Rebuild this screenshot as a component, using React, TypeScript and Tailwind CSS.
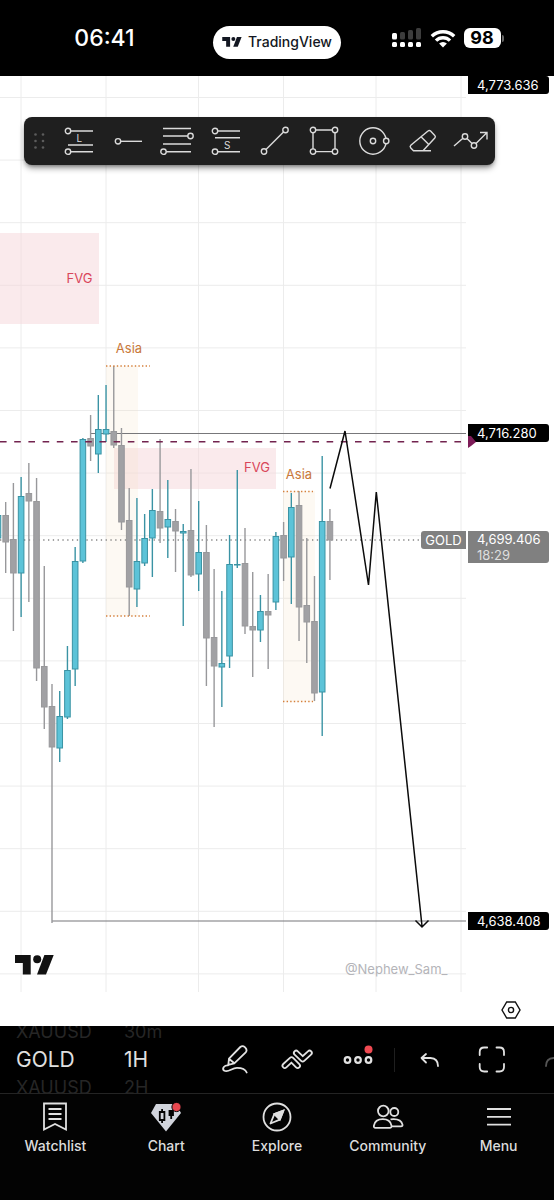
import type { ReactNode } from "react";

const CHART_TOP = 76;
const CHART_HEIGHT = 916;
const FIRST_X = 52;
const STEP = 7.72;

// [index, body top, body bottom, wick top, wick bottom, is up]
type Candle = [number, number, number, number, number, 0 | 1];

const candles: Candle[] = [
  [-7, 515, 538, 515, 538, 1],
  [-6, 515, 542, 502, 573, 0],
  [-5, 539, 573, 483, 631, 0],
  [-4, 496, 573, 477, 617, 1],
  [-3, 493, 501, 463, 602, 0],
  [-2, 501, 668, 478, 681, 0],
  [-1, 666, 707, 566, 729, 0],
  [0, 706, 747, 684, 923, 0],
  [1, 716, 748, 691, 762, 1],
  [2, 670, 717, 646, 719, 1],
  [3, 561, 669, 547, 686, 1],
  [4, 439, 561, 438, 563, 1],
  [5, 438, 446, 415, 461, 0],
  [6, 429, 454, 395, 473, 1],
  [7, 429, 434, 385, 442, 1],
  [8, 431, 445, 366, 448, 0],
  [9, 445, 522, 428, 530, 0],
  [10, 520, 587, 488, 616, 0],
  [11, 561, 589, 498, 607, 1],
  [12, 538, 563, 514, 566, 1],
  [13, 510, 538, 489, 577, 1],
  [14, 511, 528, 439, 543, 0],
  [15, 519, 527, 480, 558, 1],
  [16, 521, 531, 509, 572, 0],
  [17, 531, 533, 524, 626, 1],
  [18, 530, 575, 469, 577, 0],
  [19, 552, 574, 501, 591, 1],
  [20, 552, 638, 525, 686, 0],
  [21, 637, 666, 569, 727, 0],
  [22, 663, 667, 591, 707, 1],
  [23, 564, 656, 535, 668, 1],
  [24, 564, 565, 470, 568, 1],
  [25, 563, 626, 528, 634, 0],
  [26, 626, 630, 572, 677, 0],
  [27, 611, 630, 595, 642, 1],
  [28, 611, 615, 574, 669, 0],
  [29, 536, 602, 532, 610, 1],
  [30, 535, 558, 522, 581, 0],
  [31, 507, 557, 493, 604, 1],
  [32, 505, 607, 491, 641, 0],
  [33, 605, 622, 538, 663, 0],
  [34, 621, 693, 576, 701, 0],
  [35, 521, 692, 456, 736, 1],
  [36, 521, 540, 509, 580, 0],
];

const gridX = [21, 106, 198.5, 283.5, 376, 461];
const gridY = Array.from({ length: 15 }, (_, i) => 97.5 + i * 62.6);

function LogoMark({ className }: { className: string }) {
  return (
    <svg viewBox="0 0 39 20" className={className} fill="currentColor">
      <path d="M0 0h15.7v19.4H7.8V8H0z" />
      <circle cx="22.2" cy="4.2" r="4" />
      <path d="M29.4 0h9.3L31 19.4h-9z" />
    </svg>
  );
}

function StatusBar() {
  return (
    <header className="grid h-[76px] grid-cols-[1fr_auto_1fr] items-center bg-black text-white">
      <span className="pr-1 text-center text-[23px] font-medium">06:41</span>
      <div className="mt-2 flex h-[33px] w-32 items-center justify-center gap-1.5 rounded-full bg-white text-[#131722]">
        <LogoMark className="h-[10px] w-5" />
        <span className="text-sm font-medium">TradingView</span>
      </div>
      <div className="flex items-center justify-center gap-2">
        <svg viewBox="0 0 30 20" className="h-5 w-[30px]">
          <g fill="#fff">
            {[0, 8, 16, 24].map((x) => (
              <rect key={x} x={x} y="14" width="5" height="5" rx="1.5" />
            ))}
            <rect x="0" y="5" width="5" height="6.5" rx="1.5" />
          </g>
          <g fill="#3d3d3d">
            <rect x="8" y="4" width="5" height="7.5" rx="1.5" />
            <rect x="16" y="2" width="5" height="9.5" rx="1.5" />
            <rect x="24" y="0" width="5" height="11.5" rx="1.5" />
          </g>
        </svg>
        <svg viewBox="0 0 26 19" className="h-[19px] w-[26px]" fill="none" stroke="#fff" strokeWidth="3.4">
          <path d="M1.8 7.3a16 16 0 0 1 22.4 0" />
          <path d="M6 11.6a10 10 0 0 1 14 0" />
          <path d="M13 18.6l-3.9-4a5.6 5.6 0 0 1 7.8 0z" fill="#fff" stroke="none" />
        </svg>
        <div className="flex items-center gap-px">
          <span className="flex h-5 w-[37px] items-center justify-center rounded-md bg-white text-lg font-bold text-black">
            98
          </span>
          <span className="h-[7px] w-0.5 rounded-r-full bg-[#666]"></span>
        </div>
      </div>
    </header>
  );
}

function Tool({ label, children }: { label: string; children: ReactNode }) {
  return (
    <button aria-label={label} className="flex flex-1 justify-center">
      <svg
        viewBox="0 0 32 32"
        className="h-8 w-8 overflow-visible"
        fill="none"
        stroke="#dbdbdb"
        strokeWidth="1.4"
      >
        {children}
      </svg>
    </button>
  );
}

function Dot({ x, y }: { x: number; y: number }) {
  return <circle cx={x} cy={y} r="2.7" fill="#1f1f1f" />;
}

function DrawingToolbar() {
  return (
    <div className="absolute top-[41px] right-[59px] left-6 flex h-12 items-center rounded-lg bg-[#1f1f1f] shadow-md shadow-black/40">
      <svg viewBox="0 0 30 32" className="h-8 w-[30px] shrink-0" fill="#5c5c5c">
        {[9.5, 16, 22.5].map((y) => (
          <g key={y}>
            <circle cx="11.5" cy={y} r="1.3" />
            <circle cx="19" cy={y} r="1.3" />
          </g>
        ))}
      </svg>
      <Tool label="Long position">
        <path d="M5 6h25M5 20h25M5 26.7h25" />
        <Dot x={5} y={6} />
        <Dot x={5} y={26.7} />
        <text x="13.5" y="17" fontSize="10" fill="#dbdbdb" stroke="none">L</text>
      </Tool>
      <Tool label="Horizontal ray">
        <path d="M6 16.3h24" />
        <Dot x={6} y={16.3} />
      </Tool>
      <Tool label="Fib retracement">
        <path d="M2 3.5h28M2 11h28M2 19h28M2 26.7h28" />
        <Dot x={29.5} y={11} />
        <Dot x={2.5} y={26.7} />
      </Tool>
      <Tool label="Short position">
        <path d="M5 6h25M5 12.7h25M5 26.7h25" />
        <Dot x={5} y={6} />
        <Dot x={5} y={26.7} />
        <text x="14" y="23.5" fontSize="10" fill="#dbdbdb" stroke="none">S</text>
      </Tool>
      <Tool label="Trend line">
        <path d="M5 26.5L26.5 5" />
        <Dot x={5} y={26.5} />
        <Dot x={26.5} y={5} />
      </Tool>
      <Tool label="Rectangle">
        <path d="M5 5h22v21.6H5z" />
        <Dot x={5} y={5} />
        <Dot x={27} y={5} />
        <Dot x={5} y={26.6} />
        <Dot x={27} y={26.6} />
      </Tool>
      <Tool label="Circle">
        <circle cx="16" cy="16" r="13.2" />
        <Dot x={16} y={16} />
        <Dot x={29.2} y={16} />
      </Tool>
      <Tool label="Eraser">
        <path d="M22 6q1.3-1.2 2.6 0l4.2 4.4q1.2 1.3 0 2.6L17 25.7H7.5l-2.7-2.8q-1.3-1.3 0-2.6zM15.5 12.2l7.3 7.2M17 25.7h8" />
      </Tool>
      <Tool label="Path">
        <path d="M-1 21L10 11.5l9 9L32 7.5M25 7.5h7v7" />
        <Dot x={10} y={11.5} />
        <Dot x={19} y={20.5} />
      </Tool>
    </div>
  );
}

function PriceChart() {
  return (
    <svg
      viewBox={`0 ${CHART_TOP} 466 ${CHART_HEIGHT}`}
      className="block w-full min-w-0 flex-1"
      fontSize="13"
    >
      <g stroke="#ececec">
        {gridX.map((x) => (
          <path key={x} d={`M${x} ${CHART_TOP}V992`} />
        ))}
        {gridY.map((y) => (
          <path key={y} d={`M0 ${y}H466`} />
        ))}
      </g>
      <g fill="#f6d5da" fillOpacity="0.5">
        <rect x="0" y="233" width="99" height="91" />
        <rect x="114" y="448" width="162" height="41" />
      </g>
      <g fill="#f5dfc4" fillOpacity="0.2">
        <rect x="106" y="366" width="32" height="250" />
        <rect x="283" y="491" width="32" height="211" />
      </g>
      <path d="M0 540H421" stroke="#858585" strokeWidth="1.3" strokeDasharray="1.3 3.5" />
      <path d="M91 433.5H466M52 921H466" stroke="#77777a" strokeWidth="1.2" />
      {candles.map(([i, top, bottom, high, low, up]) => {
        const x = FIRST_X + i * STEP;
        return (
          <g key={i} stroke={up ? "#3a93a4" : "#98989b"}>
            <path d={`M${x} ${high}V${low}`} strokeWidth="1.4" />
            <rect
              x={x - 2.8}
              y={top + 0.5}
              width="5.6"
              height={Math.max(bottom - top - 0.5, 0.5)}
              fill={up ? "#5cc3d8" : "#a1a1a4"}
            />
          </g>
        );
      })}
      <path d="M0 441.7H466" stroke="#72234f" strokeWidth="1.6" strokeDasharray="6.6 7.6" />
      <path
        d="M106 366H150M106 616H150M283 491.5H313M283 701.5H313"
        stroke="#d5803c"
        strokeWidth="1.4"
        strokeDasharray="1.4 2.2"
      />
      <g fill="#c9783a" textAnchor="middle">
        <text x="129" y="353">Asia</text>
        <text x="299" y="479">Asia</text>
      </g>
      <g fill="#d9465a" textAnchor="middle">
        <text x="79.5" y="283">FVG</text>
        <text x="257" y="472">FVG</text>
      </g>
      <path
        d="M330 488.5L345 431L368.5 585L376.3 492L422 926M415.500 920.500L422 927L428.500 920.500"
        fill="none"
        stroke="#0b0b0b"
        strokeWidth="1.5"
      />
      <text x="345" y="974" fill="#b4b4b9">@Nephew_Sam_</text>
    </svg>
  );
}

interface IPriceTag {
  y: number;
  price: string;
  countdown?: string;
}

const tags: IPriceTag[] = [
  { y: 76, price: "4,773.636" },
  { y: 424, price: "4,716.280" },
  { y: 531, price: "4,699.406", countdown: "18:29" },
  { y: 912, price: "4,638.408" },
];

const toPercent = (y: number) => `${((y - CHART_TOP) / CHART_HEIGHT) * 100}%`;

function PriceAxis() {
  return (
    <div className="relative w-[88px] shrink-0 text-[13px] leading-[18px] text-white">
      {tags.map(({ y, price, countdown }) => (
        <div
          key={price}
          className={`absolute right-[5px] left-0.5 rounded-r-[3px] pl-[9px] ${
            countdown ? "bg-[#808080] leading-4" : "bg-black"
          }`}
          style={{ top: toPercent(y) }}
        >
          <div>{price}</div>
          {countdown && <div className="text-[#dedede]">{countdown}</div>}
        </div>
      ))}
      <svg
        viewBox="0 0 8 12"
        className="absolute left-0.5 h-3 w-2"
        style={{ top: toPercent(436) }}
        fill="#7d1c58"
      >
        <path d="M0 0h3l5 6-5 4-3 2z" />
      </svg>
      <div
        className="absolute right-full flex h-[18px] w-[45px] items-center justify-center rounded-l-[3px] bg-[#808080] text-[13px]"
        style={{ top: toPercent(531) }}
      >
        GOLD
      </div>
    </div>
  );
}

function ChartSection() {
  return (
    <section className="relative bg-white">
      <div className="flex">
        <PriceChart />
        <PriceAxis />
      </div>
      <DrawingToolbar />
      <LogoMark className="absolute bottom-[51px] left-[15px] h-5 w-[39px] text-[#111]" />
      <div className="flex h-[34px] items-center justify-end pt-0.5 pr-[33px]">
        <button aria-label="Chart settings">
          <svg viewBox="0 0 20 18" className="h-[18px] w-5" fill="none" stroke="#111" strokeWidth="1.4">
            <path d="M5.7 1h8.6L19 9l-4.7 8H5.7L1 9z" />
            <circle cx="10" cy="9" r="2.6" />
          </svg>
        </button>
      </div>
    </section>
  );
}

function Wheel({ before, value, after }: { before: string; value: string; after: string }) {
  return (
    <div className="flex h-full flex-col justify-center overflow-hidden whitespace-nowrap">
      <span className="text-lg leading-6 text-[#262626]">{before}</span>
      <span className="text-[21px] leading-8 text-[#e0e0e0]">{value}</span>
      <span className="text-lg leading-6 text-[#262626]">{after}</span>
    </div>
  );
}

function BarButton({ label, children }: { label: string; children: ReactNode }) {
  return (
    <button aria-label={label} className="flex w-[62px] shrink-0 justify-center">
      <svg
        viewBox="0 0 32 32"
        className="h-8 w-8"
        fill="none"
        stroke="#e2e2e2"
        strokeWidth="1.8"
        strokeLinecap="round"
        strokeLinejoin="round"
      >
        {children}
      </svg>
    </button>
  );
}

function ChartBar() {
  return (
    <div className="flex h-[67px] items-center overflow-hidden bg-black">
      <div className="h-full w-[124px] shrink-0 pl-4">
        <Wheel before="XAUUSD" value="GOLD" after="XAUUSD" />
      </div>
      <div className="h-full w-20 shrink-0">
        <Wheel before="30m" value="1H" after="2H" />
      </div>
      <BarButton label="Draw">
        <path d="M10 14.7L21.3 3q2.200-2 4.800.3 2.600 2.600.6 5L15.300 19.300l-6 1.500zM10 14.700l5.300 4.600" />
        <path d="M9 21.300c-3.500-.3-6.300 3.200-4 5.200 4.300 2.800 7.500-2.700 13-2.700 4.500 0 8.500 1.700 9.700 4.700" />
      </BarButton>
      <BarButton label="Indicators">
        <path d="M3.800 21.700l6.700-6.200 6.200 6.200" strokeWidth="6.400" />
        <path d="M3.800 21.700l6.700-6.200 6.200 6.200" stroke="#000" strokeWidth="2.800" />
        <path d="M15.200 9l6.500 6.200L28.500 9" strokeWidth="6.400" />
        <path d="M15.200 9l6.500 6.200L28.500 9" stroke="#000" strokeWidth="2.800" />
      </BarButton>
      <BarButton label="More">
        <g strokeWidth="2.2">
          <circle cx="4.5" cy="16" r="2.8" />
          <circle cx="15" cy="16" r="2.8" />
          <circle cx="25.5" cy="16" r="2.8" />
        </g>
        <circle cx="25.5" cy="5.5" r="4" fill="#f04a52" stroke="none" />
      </BarButton>
      <div className="flex w-[9px] shrink-0 justify-center">
        <div className="h-6 w-px bg-[#1f1f1f]"></div>
      </div>
      <BarButton label="Undo">
        <path d="M12 10l-4.500 4L12 18.500M8 14h8.500q7.500.5 7.500 8" />
      </BarButton>
      <BarButton label="Fullscreen">
        <path d="M3.700 11V8q0-4.500 4.500-4.500h3M20.500 3.500h3q4.500 0 4.500 4.500v3M28 20v3q0 4.500-4.500 4.500h-3M11.200 27.500h-3q-4.500 0-4.500-4.500v-3" />
      </BarButton>
      <BarButton label="Redo">
        <path d="M20 10l4.500 4-4.500 4.500M24 14h-8.500Q8 14.500 8 22" stroke="#555" />
      </BarButton>
    </div>
  );
}

function NavItem({ label, children }: { label: string; children: ReactNode }) {
  return (
    <a href="#" className="flex flex-1 flex-col items-center gap-[3px]">
      <svg viewBox="0 0 32 32" className="h-8 w-8" fill="none" stroke="#e0e0e0" strokeWidth="1.8">
        {children}
      </svg>
      <span className="text-sm leading-5 font-medium text-[#dcdcdc]">{label}</span>
    </a>
  );
}

function BottomNav() {
  return (
    <nav className="flex h-[107px] border-t border-[#242424] bg-[#030303] pt-[7px]">
      <NavItem label="Watchlist">
        <path d="M5 2.500h22v26l-11-5.500L5 28.500z" />
        <path d="M9.500 8h13M9.500 13h13M9.500 18h13" />
      </NavItem>
      <NavItem label="Chart">
        <path d="M6 3h20l5 9-15 18.500L1 12z" fill="#d1d4dc" stroke="none" />
        <g stroke="#030303">
          <path d="M9.800 11h4.600v8H9.800zM12.100 8v3M12.100 19v3" />
          <path d="M19.500 10h3.500v4h-3.500zM21.200 14v4" fill="#030303" />
        </g>
        <circle cx="26.500" cy="6" r="4.600" fill="#e8474f" stroke="#030303" strokeWidth="1" />
      </NavItem>
      <NavItem label="Explore">
        <circle cx="16" cy="16" r="13.500" />
        <path d="M22.500 9.500l-3.700 9.200-2.800-2.800-2.700-2.700z" fill="#e0e0e0" />
        <path d="M22.500 9.500l-9.200 3.700-3.800 9.300 9.300-3.800z" strokeLinejoin="round" />
      </NavItem>
      <NavItem label="Community">
        <circle cx="11.300" cy="10" r="5.300" />
        <circle cx="22.300" cy="11" r="4" />
        <path d="M3.500 26.800h14.300q2 0 1.700-2.200-1.200-6.400-8.800-6.400t-8.800 6.400q-.4 2.200 1.600 2.200zM18.500 18.400q10.500-1.200 12 5.200.3 1.800-1.500 1.800h-9" />
      </NavItem>
      <NavItem label="Menu">
        <path d="M4 8h24M4 15.800h24M4 23.600h24" />
      </NavItem>
    </nav>
  );
}

export default function App() {
  return (
    <main className="bg-black font-['Inter',sans-serif]">
      <StatusBar />
      <ChartSection />
      <ChartBar />
      <BottomNav />
    </main>
  );
}
